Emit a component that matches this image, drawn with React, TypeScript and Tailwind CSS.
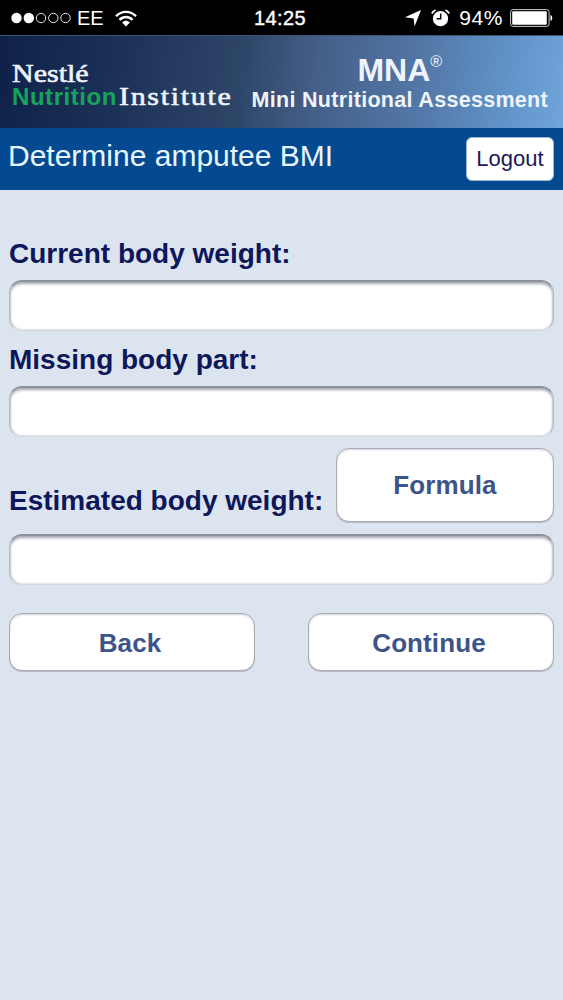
import type { ReactNode } from "react";

function StatusBar() {
  return (
    <div className="relative flex h-[35px] items-center justify-between bg-black pt-px pr-[10px] pl-[11px] text-[20px] text-white">
      <div className="flex items-center">
        <svg width="61" height="12" viewBox="0 0 61 12" fill="none" stroke="#e5e5e5">
          <circle cx="5.5" cy="6" r="5.2" fill="#fff" stroke="none" />
          <circle cx="17.8" cy="6" r="5.2" fill="#fff" stroke="none" />
          <circle cx="30" cy="6" r="4.7" />
          <circle cx="42.3" cy="6" r="4.7" />
          <circle cx="54.5" cy="6" r="4.7" />
        </svg>
        <span className="ml-[5px] tracking-[-0.2px]">EE</span>
        <svg className="ml-3" width="22" height="17" viewBox="0 0 22 17" fill="none" stroke="#fff" strokeWidth="2.3">
          <path d="M1 6.2C6.6 .3 15.4 .3 21 6.2" />
          <path d="M4.5 9.9C8.2 6 13.8 6 17.5 9.9" />
          <path d="M7.1 12.5c2.2-2.3 5.6-2.3 7.8 0L11 16.5z" fill="#fff" stroke="none" />
        </svg>
      </div>
      <span className="absolute left-[254px] text-[20px] tracking-[0.4px] [-webkit-text-stroke:0.4px_#fff]">14:25</span>
      <div className="flex items-center">
        <svg width="16" height="17" viewBox="0 0 16 17" fill="#fff">
          <path d="M16 0 9.6 16.4 8.6 8.4 0 7.2z" />
        </svg>
        <svg className="ml-[10px]" width="19" height="18" viewBox="0 0 19 18">
          <circle cx="9.5" cy="9.7" r="7.6" fill="#fff" />
          <path d="M.8 4.5A9 9 0 0 1 4.6 1M14.4 1a9 9 0 0 1 3.8 3.5" fill="none" stroke="#fff" strokeWidth="1.8" />
          <path d="M9.7 4.5v5.3H5.6" fill="none" stroke="#000" strokeWidth="1.5" />
        </svg>
        <span className="ml-[9px] text-[21px] tracking-[0.6px]">94%</span>
        <svg className="ml-[7px]" width="43" height="18" viewBox="0 0 43 18">
          <rect x=".6" y=".6" width="38.5" height="16.8" rx="2.5" fill="none" stroke="#ccc" />
          <rect x="2.2" y="2.2" width="34.6" height="13.6" rx="1" fill="#fff" />
          <path d="M40.5 6c2.3.5 2.3 5.5 0 6z" fill="#fff" />
        </svg>
      </div>
    </div>
  );
}

function Banner() {
  return (
    <header className="flex h-[93px] justify-between border-t border-[#3e5674] bg-[linear-gradient(97deg,#0f2148_0%,#1d3259_22%,#2e4668_43%,#445f88_56%,#5377a7_74%,#6294c9_90%,#70a5da_100%)] pr-[15px] pl-3 whitespace-nowrap text-[#eef3fc]">
      <div className="pt-[27px]">
        <div className="w-fit origin-left scale-x-[1.2] font-['Liberation_Serif'] text-[25px] leading-[22px] [-webkit-text-stroke:0.6px_#eef3fc]">
          Nestlé
        </div>
        <div className="flex items-baseline leading-[24px]">
          <span className="w-[107px] text-[24px] font-bold tracking-[0.55px] text-[#16a35c]">Nutrition</span>
          <span className="origin-left scale-x-[1.2] font-['Liberation_Serif'] text-[25px] tracking-[1.4px] [-webkit-text-stroke:0.6px_#eef3fc]">
            Institute
          </span>
        </div>
      </div>
      <div className="flex flex-col items-center pt-[17px] font-bold">
        <div className="flex h-[34px] text-[32px] leading-[34px]">
          MNA<span className="text-[16px] leading-[18px] font-normal">®</span>
        </div>
        <div className="text-[21.5px] leading-[26px] tracking-[0.3px]">Mini Nutritional Assessment</div>
      </div>
    </header>
  );
}

function Button({ className, children }: { className: string; children: ReactNode }) {
  return (
    <button
      className={`rounded-[13px] border-[1.5px] border-[#a9abb5] bg-white text-[26px] font-bold tracking-[0.1px] text-[#3d5488] shadow-[0_1px_0_#b9bcc6,inset_0_1px_2px_#d5d7de] ${className}`}
    >
      {children}
    </button>
  );
}

function Label({ htmlFor, children }: { htmlFor: string; children: ReactNode }) {
  return (
    <label htmlFor={htmlFor} className="block text-[28px] leading-[36px] font-bold whitespace-nowrap text-[#0d1759]">
      {children}
    </label>
  );
}

function Field({ id, className }: { id: string; className: string }) {
  return (
    <input
      id={id}
      className={`block h-[51px] w-full rounded-[13px] border border-t-2 border-[#b5b9c2] border-t-[#8d919d] border-b-[#d3d6dc] bg-white px-3 text-2xl shadow-[inset_0_3px_3px_-1px_#a5a8b0,inset_1px_0_2px_#c9ccd2,inset_-1px_0_2px_#c9ccd2] outline-none ${className}`}
    />
  );
}

export default function App() {
  return (
    <div className="h-[1000px] w-[563px] overflow-hidden bg-[#dce4f0] font-['Liberation_Sans',Arial,sans-serif]">
      <StatusBar />
      <Banner />
      <div className="flex h-[62px] items-start justify-between bg-[#034a90] pr-[9px] pl-2">
        <h1 className="pt-[11px] text-[30px] leading-[34px] whitespace-nowrap text-[#e9f5ff]">Determine amputee BMI</h1>
        <button className="mt-[9px] h-[44px] w-[88px] rounded-[6px] border border-[#9fb6d3] bg-white pb-0.5 text-[22px] text-[#1c1a57]">
          Logout
        </button>
      </div>
      <main className="pt-[46px] pr-[9px] pl-[9px]">
        <Label htmlFor="current">Current body weight:</Label>
        <Field id="current" className="mt-2" />
        <div className="mt-[11px]">
          <Label htmlFor="missing">Missing body part:</Label>
        </div>
        <Field id="missing" className="mt-2" />
        <div className="mt-[11px] flex h-[75px] items-end justify-between">
          <div className="pb-1">
            <Label htmlFor="estimated">Estimated body weight:</Label>
          </div>
          <Button className="mb-px h-[74px] w-[218px]">Formula</Button>
        </div>
        <Field id="estimated" className="mt-[11px]" />
        <div className="mt-7 flex justify-between">
          <Button className="h-[58px] w-[246px] pt-0.5 pr-1">Back</Button>
          <Button className="h-[58px] w-[246px] pt-0.5 pr-1">Continue</Button>
        </div>
      </main>
    </div>
  );
}
